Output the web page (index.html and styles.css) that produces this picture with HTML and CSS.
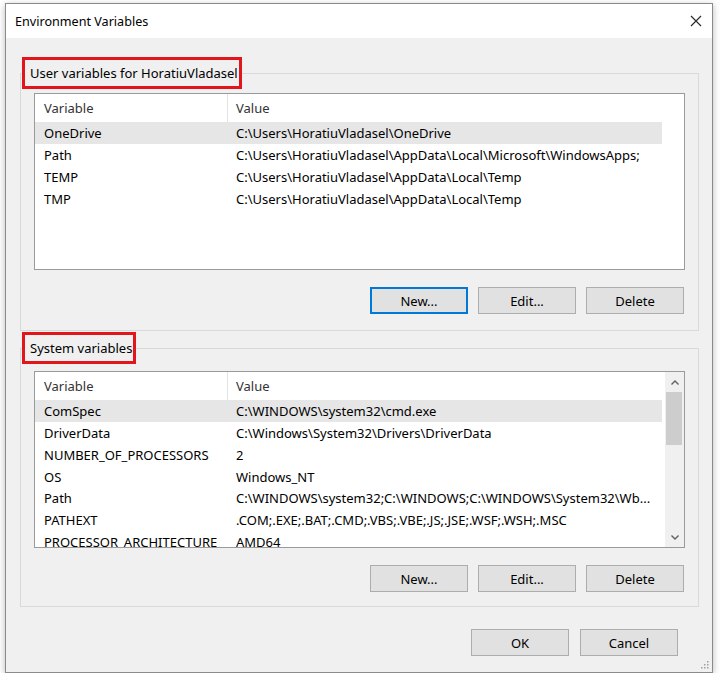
FILE: index.html
```html
<!DOCTYPE html>
<html lang="en">
<head>
<meta charset="utf-8">
<title>Environment Variables</title>
<link rel="stylesheet" href="styles.css">
</head>
<body>
<div class="window">
  <div class="titlebar">
    <span class="title">Environment Variables</span>
    <svg class="close" viewBox="0 0 12 12" aria-label="Close"><path d="M1 1L11 11M11 1L1 11" stroke="#2b2b2b" stroke-width="1.2" fill="none"/></svg>
  </div>
  <div class="content">
    <fieldset class="group group-user">
      <legend class="legend">User variables for HoratiuVladasel</legend>
      <div class="list">
        <div class="list-main">
          <div class="list-head">
            <div class="col-var">Variable</div>
            <div class="col-val">Value</div>
          </div>
          <div class="rows">
            <div class="row sel"><div class="col-var">OneDrive</div><div class="col-val">C:\Users\HoratiuVladasel\OneDrive</div></div>
            <div class="row"><div class="col-var">Path</div><div class="col-val">C:\Users\HoratiuVladasel\AppData\Local\Microsoft\WindowsApps;</div></div>
            <div class="row"><div class="col-var">TEMP</div><div class="col-val">C:\Users\HoratiuVladasel\AppData\Local\Temp</div></div>
            <div class="row"><div class="col-var">TMP</div><div class="col-val">C:\Users\HoratiuVladasel\AppData\Local\Temp</div></div>
          </div>
        </div>
      </div>
      <div class="btns">
        <button class="btn focus">New...</button>
        <button class="btn">Edit...</button>
        <button class="btn">Delete</button>
      </div>
    </fieldset>

    <fieldset class="group group-system">
      <legend class="legend">System variables</legend>
      <div class="list">
        <div class="list-main">
          <div class="list-head">
            <div class="col-var">Variable</div>
            <div class="col-val">Value</div>
          </div>
          <div class="rows">
            <div class="row sel"><div class="col-var">ComSpec</div><div class="col-val">C:\WINDOWS\system32\cmd.exe</div></div>
            <div class="row"><div class="col-var">DriverData</div><div class="col-val">C:\Windows\System32\Drivers\DriverData</div></div>
            <div class="row"><div class="col-var">NUMBER_OF_PROCESSORS</div><div class="col-val">2</div></div>
            <div class="row"><div class="col-var">OS</div><div class="col-val">Windows_NT</div></div>
            <div class="row"><div class="col-var">Path</div><div class="col-val">C:\WINDOWS\system32;C:\WINDOWS;C:\WINDOWS\System32\Wb...</div></div>
            <div class="row"><div class="col-var">PATHEXT</div><div class="col-val">.COM;.EXE;.BAT;.CMD;.VBS;.VBE;.JS;.JSE;.WSF;.WSH;.MSC</div></div>
            <div class="row"><div class="col-var">PROCESSOR_ARCHITECTURE</div><div class="col-val">AMD64</div></div>
          </div>
        </div>
        <div class="scrollbar">
          <div class="sb-btn"><svg viewBox="0 0 8 5" class="chev"><path d="M0.5 4.5L4 1L7.5 4.5" stroke="#606060" stroke-width="1.4" fill="none"/></svg></div>
          <div class="sb-thumb"></div>
          <div class="sb-track"></div>
          <div class="sb-btn"><svg viewBox="0 0 8 5" class="chev"><path d="M0.5 0.5L4 4L7.5 0.5" stroke="#606060" stroke-width="1.4" fill="none"/></svg></div>
        </div>
      </div>
      <div class="btns">
        <button class="btn">New...</button>
        <button class="btn">Edit...</button>
        <button class="btn">Delete</button>
      </div>
    </fieldset>

    <div class="footer">
      <button class="btn">OK</button>
      <button class="btn">Cancel</button>
    </div>
  </div>
  <svg class="grip" viewBox="0 0 10 10"><g fill="#a0a0a0"><rect x="8" y="2" width="1.5" height="1.5"/><rect x="5" y="5" width="1.5" height="1.5"/><rect x="8" y="5" width="1.5" height="1.5"/><rect x="2" y="8" width="1.5" height="1.5"/><rect x="5" y="8" width="1.5" height="1.5"/><rect x="8" y="8" width="1.5" height="1.5"/></g></svg>
</div>
</body>
</html>
```

FILE: styles.css
```css
* { box-sizing: border-box; }

body {
  margin: 0;
  background: #ffffff;
  font-family: "Segoe UI", "Noto Sans", sans-serif;
  font-size: 13px;
  color: #000;
}

.window {
  position: relative;
  margin: 3px 0 0 5px;
  width: 708px;
  height: 670px;
  border: 1px solid #8a8a8a;
  background: #f0f0f0;
  box-shadow: 0 2px 7px rgba(0, 0, 0, 0.28);
  display: flex;
  flex-direction: column;
}

.titlebar {
  flex: none;
  height: 34px;
  background: #fff;
  display: flex;
  align-items: center;
  justify-content: space-between;
  padding: 0 10px 0 9px;
}

.title { font-size: 12.6px; padding-top: 1px; }

.close { width: 12px; height: 12px; }

.content {
  flex: 1;
  display: flex;
  flex-direction: column;
  padding: 19px 13px 0 14px;
}

.group {
  margin: 0;
  min-inline-size: 0;
  border: 1px solid #d9d9d9;
  padding: 4px 13px 16px 13px;
}

.group-system {
  margin-top: 1px;
  padding-top: 7px;
  padding-bottom: 14px;
}

.legend {
  margin-left: -12px;
  height: 32px;
  padding: 1px 1px 0 5px;
  line-height: 25px;
  border: 3px solid #e2151d;
  white-space: nowrap;
}

.list {
  height: 177px;
  border: 1px solid #9a9a9a;
  background: #fff;
  display: flex;
  overflow: hidden;
}

.list-main {
  flex: 1;
  min-width: 0;
}

.list-head {
  height: 28px;
  display: flex;
  align-items: stretch;
  color: #333;
}

.list-head .col-var {
  border-right: 1px solid #e3e3e3;
}

.col-var {
  flex: none;
  width: 193px;
  padding-left: 9px;
  display: flex;
  align-items: center;
  white-space: nowrap;
  overflow: hidden;
}

.col-val {
  flex: 1;
  padding-left: 8px;
  display: flex;
  align-items: center;
  white-space: nowrap;
  overflow: hidden;
}

.rows { width: 627px; }

.row {
  height: 21.75px;
  display: flex;
  padding-top: 1px;
}

.row.sel { background: #e6e6e6; }

.scrollbar {
  flex: none;
  width: 19px;
  background: #f0f0f0;
  display: flex;
  flex-direction: column;
}

.sb-btn {
  height: 20px;
  display: flex;
  align-items: center;
  justify-content: center;
}

.chev { width: 8px; height: 5px; }

.sb-thumb {
  height: 53px;
  margin: 0 2px 0 1px;
  background: #cdcdcd;
}

.sb-track { flex: 1; }

.btns {
  display: flex;
  justify-content: flex-end;
  gap: 10px;
  margin-top: 17px;
  margin-right: 1px;
}

.btn {
  width: 98px;
  height: 27px;
  background: #e1e1e1;
  border: 1px solid #adadad;
  font-family: inherit;
  font-size: 13px;
  color: #000;
  padding: 0;
}

.btn.focus {
  border-color: #0078d7;
  box-shadow: inset 0 0 0 1px #0078d7;
}

.footer {
  display: flex;
  justify-content: flex-end;
  gap: 11px;
  margin-top: 22px;
  padding-right: 21px;
}

.grip {
  position: absolute;
  right: 3px;
  bottom: 3px;
  width: 10px;
  height: 10px;
}
```
